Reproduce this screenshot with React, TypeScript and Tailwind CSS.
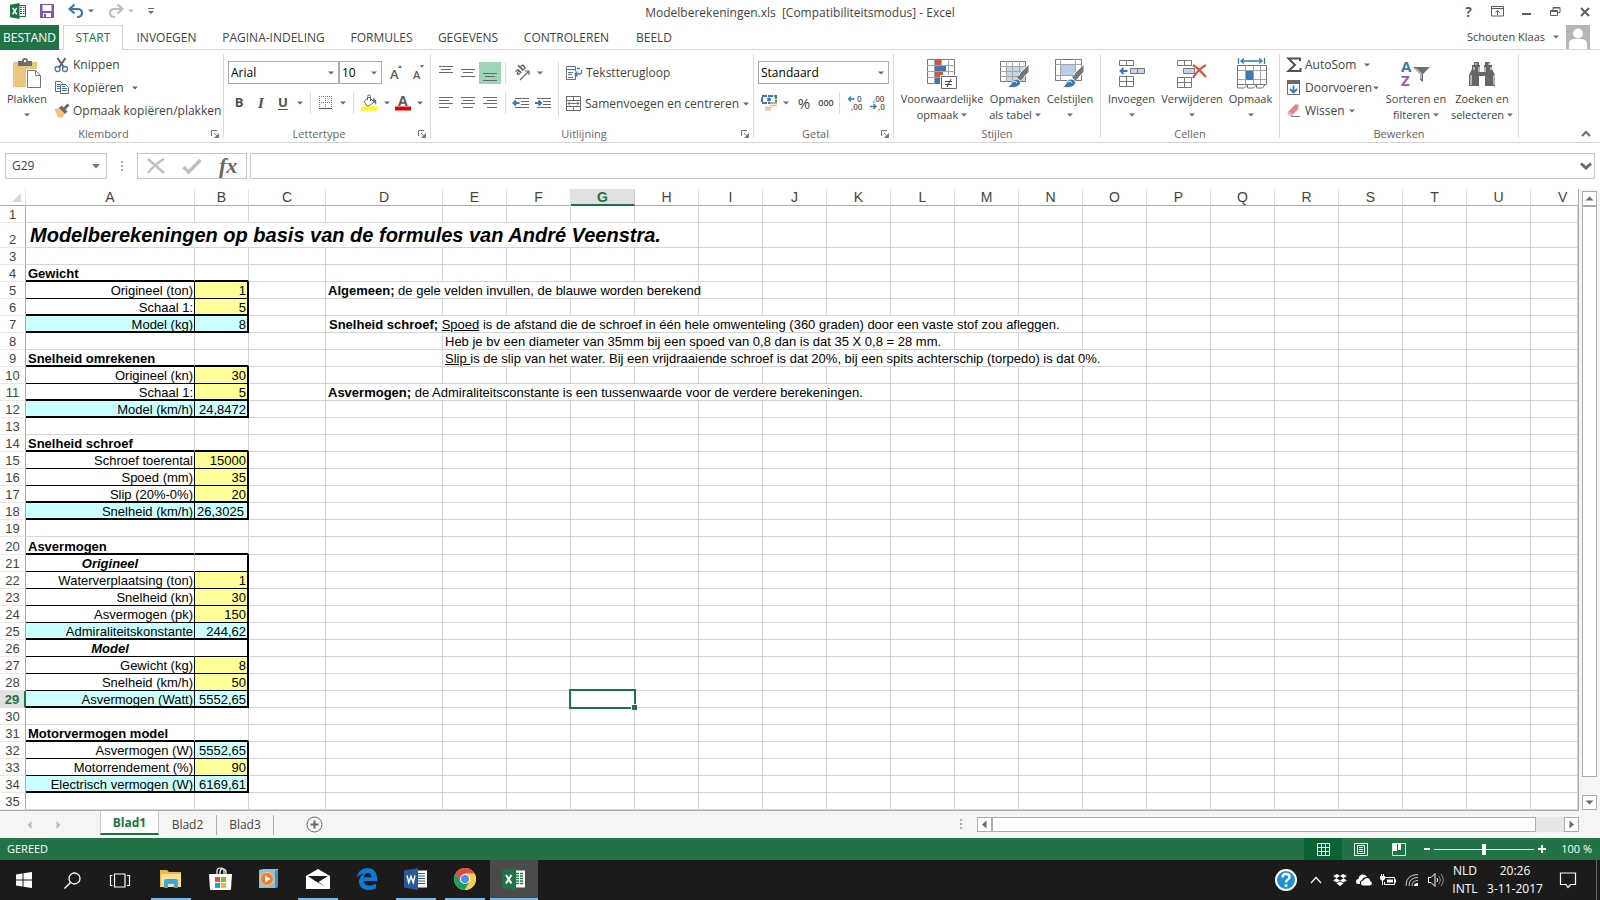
import React from 'react';

type IconProps = { w: number; h: number; children: React.ReactNode; className?: string };

const Icon: React.FC<IconProps> = ({ w, h, children, className = '' }) => (
  <svg width={w} height={h} viewBox={`0 0 ${w} ${h}`} fill="none" className={`shrink-0 overflow-visible ${className}`} aria-hidden="true">
    {children}
  </svg>
);

const Caret = ({ className = 'text-[#6a6a6a]' }: { className?: string }) => (
  <Icon w={6} h={4} className={className}>
    <path d="M0 0.5h6L3 3.5z" fill="currentColor" />
  </Icon>
);

const Launcher = ({ label }: { label: string }) => (
  <button type="button" aria-label={label} className="flex h-4 w-4 items-center justify-center">
    <Icon w={8} h={8}>
      <path d="M0.5 6V0.5H6" stroke="#777" />
      <path d="M3 3l3 3M7.5 3.5v4h-4" stroke="#777" />
      <path d="M7 4v3H4z" fill="#777" />
    </Icon>
  </button>
);

/* ---------- ribbon drawings ---------- */

const ExcelLogo = ({ size = 16 }: { size?: number }) => (
  <svg width={size} height={size} viewBox="0 0 16 16" className="shrink-0" aria-hidden="true">
    <path d="M9 2h7v12H9z" fill="#fff" />
    <path d="M9 2.5h6.5v11H9" fill="none" stroke="#217346" />
    <path d="M10 4.5h2M13 4.5h1.5M10 6.5h2M13 6.5h1.5M10 8.5h2M13 8.5h1.5M10 10.5h2M13 10.5h1.5" stroke="#217346" />
    <path d="M0 1.8L9.5 0v16L0 14.2z" fill="#217346" />
    <path d="M2.7 4.8l4 6.5M6.7 4.8l-4 6.5" stroke="#fff" strokeWidth="1.5" />
  </svg>
);

const PasteIcon = () => (
  <Icon w={30} h={32}>
    <path d="M1 4h24v25H1z" fill="#ecc57f" />
    <path d="M6 3h4a3 3 0 0 1 6 0h4v5H6z" fill="#6d6d6d" />
    <circle cx="13" cy="3" r="1.2" fill="#fff" />
    <path d="M14 11h10l6 6v14H14z" fill="#fff" />
    <path d="M15.5 12.5h8l5 5v12h-13z" fill="#fff" stroke="#777" />
    <path d="M23.5 12.5v5h5" stroke="#777" />
  </Icon>
);

const CutIcon = () => (
  <Icon w={16} h={16}>
    <path d="M3.5 1L10 10.5M11.5 1L5 10.5" stroke="#5f5f5f" strokeWidth="2" />
    <circle cx="3.5" cy="12" r="2.5" stroke="#3d77b5" strokeWidth="1.3" />
    <circle cx="11" cy="12" r="2.5" stroke="#3d77b5" strokeWidth="1.3" />
  </Icon>
);

const CopyIcon = () => (
  <Icon w={16} h={16}>
    <path d="M1.5 1.5h5l2 2v8h-7z" fill="#fff" stroke="#6a6a6a" />
    <path d="M3 4.5h3M3 6.5h3M3 8.5h3" stroke="#3d77b5" />
    <path d="M6.5 4.5h5l3 3v6h-8z" fill="#fff" stroke="#6a6a6a" />
    <path d="M8 8.5h5M8 10.5h5M8 6.5h3" stroke="#3d77b5" />
  </Icon>
);

const BrushIcon = () => (
  <Icon w={16} h={16}>
    <path d="M0.5 6l4.5-1 6 6-3 3.5H4z" fill="#ecc57f" />
    <path d="M5 5l2.5-2.5 6 6L11 11z" fill="#6a6a6a" />
    <path d="M10 6l4.5-4.5" stroke="#6a6a6a" strokeWidth="3" />
  </Icon>
);

const BordersIcon = () => (
  <Icon w={14} h={14}>
    <path d="M0.5 0v12M6.5 0v12M12.5 0v12M0 0.5h13M0 6.5h13" stroke="#777" strokeDasharray="1 1" />
    <path d="M0 12.5h13" stroke="#555" />
  </Icon>
);

const FillIcon = () => (
  <Icon w={17} h={16}>
    <path d="M3 6.5l5-4.5 5 5-5 4H6z" fill="#fff" stroke="#6a6a6a" />
    <path d="M6.5 5V1.5a1.5 1.5 0 0 1 3 0V6" stroke="#6a6a6a" />
    <path d="M12 3c3 1 4 3.5 3 7-1-2-1.5-3-3-3.5z" fill="#3d77b5" />
    <path d="M0 11.5h16v4H0z" fill="#ffff00" />
  </Icon>
);

const AlignIcon = ({ lines }: { lines: string }) => (
  <Icon w={14} h={14}>
    <path d={lines} stroke="#6a6a6a" />
  </Icon>
);

const OrientationIcon = () => (
  <Icon w={16} h={16}>
    <text transform="translate(4 11) rotate(-45)" fill="#5f5f5f" className="text-[10px] font-bold">ab</text>
    <path d="M6 15L14.500 6.500M11 6h4v4" stroke="#6a6a6a" strokeWidth="1.2" />
  </Icon>
);

const IndentIcon = ({ right }: { right?: boolean }) => (
  <Icon w={16} h={12}>
    <path d="M2 1.5h14M8 4.5h8M8 7.5h8M2 10.5h14" stroke="#6a6a6a" />
    <path d={right ? 'M0 6h6M3.5 3.5L6 6 3.5 8.5' : 'M6.5 6h-6M3 3.5L0.5 6 3 8.5'} stroke="#3d77b5" strokeWidth="2" />
  </Icon>
);

const WrapIcon = () => (
  <Icon w={17} h={16}>
    <path d="M0.5 1.5h9v3h-9zM0.5 9.5v5h9v-5M0.5 4.5v5M9.5 4.5v2" stroke="#6a6a6a" />
    <path d="M2 7.5h5M2 9.5h4M2 12.5h5" stroke="#3d77b5" />
    <path d="M11 3.5h3M15.5 5v2.5q0 1.500-2 1.500H9M11.5 6.5L9 9l2.5 2.5" stroke="#3d77b5" strokeWidth="1.3" />
  </Icon>
);

const MergeIcon = () => (
  <Icon w={16} h={16}>
    <path d="M0.5 0.5h14v14h-14zM0.5 4.5h14M0.5 10.5h14M7.5 0.5v4M7.5 10.5v4" stroke="#6a6a6a" />
    <path d="M2 7.5h11M4 5.5l-2 2 2 2M11 5.5l2 2-2 2" stroke="#3d77b5" />
  </Icon>
);

const CurrencyIcon = () => (
  <Icon w={17} h={16}>
    <path d="M1 1h14v7H1z" fill="#fff" stroke="#3d77b5" strokeWidth="2" strokeDasharray="5 1" />
    <circle cx="8" cy="4.5" r="2" fill="#3d77b5" />
    <path d="M9 8h7M9 10.5h7M4 12.5h6M4 14.5h6" stroke="#ecb877" strokeWidth="1.7" />
  </Icon>
);

const DecimalIcon = ({ more }: { more?: boolean }) => (
  <Icon w={16} h={16}>
    <text x={more ? 9 : 3} y="7" fill="#5a5a5a" className="text-[8px] font-semibold">{more ? '0' : ',00'}</text>
    <text x={more ? 3 : 8} y="15" fill="#5a5a5a" className="text-[8px] font-semibold">{more ? ',00' : ',0'}</text>
    <path d={more ? 'M6.5 4h-6M3 1.5L0.5 4 3 6.5' : 'M0 11.5h6M3.5 9L6 11.5 3.5 14'} stroke="#3d77b5" strokeWidth="1.3" />
  </Icon>
);

const ConditionalIcon = () => (
  <Icon w={32} h={32}>
    <path d="M1.5 1.5h27v24h-27z" fill="#fff" stroke="#777" />
    <path d="M1 7.5h28M1 13.5h28M1 19.5h28M8.5 1v25M15.5 1v25M22.5 1v25" stroke="#a5a5a5" />
    <path d="M9 2h6v5H9zM9 14h8v5H9z" fill="#d0593c" />
    <path d="M9 8h11v5H9zM9 20h5v6H9z" fill="#3d77b5" />
    <path d="M14 17h18v15H14z" fill="#fff" />
    <path d="M15.5 18.5h15v12h-15z" fill="#fff" stroke="#6a6a6a" />
    <path d="M19 23.5h7M19 26.5h7M25 21l-4 8" stroke="#444" />
  </Icon>
);

const PaintBrush = () => (
  <>
    <path d="M30 6v8l-6 6-4-4z" fill="#777" stroke="#fff" />
    <path d="M22 16l-4 3 3 4 4-4z" fill="#777" />
    <path d="M8 29c5-1 4-8 9-8 4 0 6 4 3 6.5C17 30 12 30 8 29z" fill="#3d77b5" stroke="#fff" />
    <path d="M14 24q3-2 4 1" stroke="#fff" />
  </>
);

const TableStyleIcon = () => (
  <Icon w={32} h={32}>
    <path d="M1.5 3.5h25v20h-25z" fill="#fff" stroke="#777" />
    <path d="M8 9h18v14H8z" fill="#c3d6ea" />
    <path d="M1 8.5h26M1 13.5h26M1 18.5h26M7.5 3v21M13.5 3v21M20.5 3v21" stroke="#a5a5a5" />
    <PaintBrush />
  </Icon>
);

const CellStyleIcon = () => (
  <Icon w={32} h={32}>
    <path d="M1.5 1.5h26v21h-26z" fill="#fff" stroke="#777" />
    <path d="M1 6.5h27M1 17.5h27M6.5 1v22M21.5 1v22" stroke="#a5a5a5" />
    <path d="M7 7h14v10H7z" fill="#b9cfe8" />
    <PaintBrush />
  </Icon>
);

const InsertIcon = () => (
  <Icon w={30} h={30}>
    <path d="M2.5 1.5h14v5h-14zM9.5 1.5v5M2.5 17.5h14v10h-14zM2.5 22.5h14M9.5 17.5v10" fill="#fff" stroke="#777" />
    <path d="M13.5 9.5h14v5h-14zM20.5 9.5v5" fill="#c3d6ea" stroke="#777" />
    <path d="M10.5 12h-7M6.5 9l-3 3 3 3" stroke="#3d77b5" strokeWidth="1.8" />
  </Icon>
);

const DeleteIcon = () => (
  <Icon w={32} h={30}>
    <path d="M1.5 1.5h14v5h-14zM8.5 1.5v5M1.5 18.5h14v10h-14zM1.5 23.5h14M8.5 18.5v10" fill="#fff" stroke="#777" />
    <path d="M7.5 9.5h11v5h-11z" fill="#c3d6ea" stroke="#777" />
    <path d="M17 6q6 4 13 12M30 6q-8 4-13 13" stroke="#d0593c" strokeWidth="2.2" />
  </Icon>
);

const FormatIcon = () => (
  <Icon w={32} h={32}>
    <path d="M3.5 0v6M29.5 0v6M6 3h21M9 0.5L6 3l3 2.5M24 0.5L27 3l-3 2.5" stroke="#3d77b5" strokeWidth="1.3" />
    <path d="M2.5 7.5h29v19h-29z" fill="#fff" stroke="#777" />
    <path d="M3 12.5h28M3 21.5h28M10.5 8v18M18.5 8v18M25.5 8v18" stroke="#a5a5a5" />
    <path d="M2.5 26v4h7l3-3v3h6l3-3v3h6l3-4" stroke="#777" />
    <path d="M11 13h7v9h-7z" fill="#3d77b5" />
  </Icon>
);

const SigmaIcon = () => (
  <Icon w={16} h={16}>
    <path d="M14 4V1.500H2.500L9 8l-6.500 6h12v-3" stroke="#505050" strokeWidth="2" />
  </Icon>
);

const FillDownIcon = () => (
  <Icon w={16} h={16}>
    <path d="M1.5 1.5h12v13h-12z" fill="#fff" stroke="#6a6a6a" />
    <path d="M1 0h13v4H1z" fill="#6a6a6a" />
    <path d="M7.5 5.5v7M4 9l3.5 3.5L11 9" stroke="#3d77b5" strokeWidth="1.8" />
  </Icon>
);

const EraserIcon = () => (
  <Icon w={16} h={16}>
    <path d="M1.5 9.5L9 1.5h3.5v4L6.5 12z" fill="#e08491" />
    <path d="M1.5 10l2-1.5 3.5 3-1 1.5H3z" fill="#eeb0b8" />
    <path d="M5 13.5h9" stroke="#777" />
  </Icon>
);

const SortIcon = () => (
  <Icon w={32} h={32}>
    <text x="1" y="14" fill="#3d77b5" className="text-[15px] leading-3 font-bold">A</text>
    <text x="1" y="28" fill="#8d5fb0" className="text-[15px] leading-3 font-bold">Z</text>
    <path d="M13 9h17l-7 7v8l-3-2v-6z" fill="#6f6f6f" />
    <path d="M16 10.5l5 5v5.5" stroke="#fff" />
  </Icon>
);

const BinocularsIcon = () => (
  <Icon w={28} h={26}>
    <path d="M1 25V14l3-6V4h2V1h5v3h1v7h4V4h1V1h5v3h2v4l3 6v11H17v-10h-6v10z" fill="#666" />
    <path d="M8 2v2M21 2v2M6 6v3M23 6v3M3 14v10M26 14v10M11 6v5M17 6v5" stroke="#fff" />
  </Icon>
);

/* ---------- ribbon ---------- */

const Group = ({ label, width, launcher, children }: { label: string; width: string; launcher?: boolean; children: React.ReactNode }) => (
  <section aria-label={label} className={`my-1 flex shrink-0 flex-col border-r border-[#dadada] ${width}`}>
    <div className="flex h-[75px] items-start">{children}</div>
    <div className="flex h-[9px] items-center">
      <span className="flex-1 text-center text-[11px] leading-[9px] text-[#666]">{label}</span>
      {launcher && <Launcher label={`${label} opties`} />}
    </div>
  </section>
);

const BigButton = ({ icon, lines, width }: { icon: React.ReactNode; lines: string[]; width: string }) => (
  <button type="button" className={`flex shrink-0 flex-col items-center whitespace-nowrap text-[11px] leading-4 ${width}`}>
    <span className="flex h-[37px] items-center justify-center pt-[2px]">{icon}</span>
    <span className="h-4">{lines[0]}</span>
    <span className="flex h-4 items-center gap-[3px]">
      {lines[1]}
      <Caret />
    </span>
  </button>
);

const SmallButton = ({ icon, label, caret, gap = 'gap-1' }: { icon: React.ReactNode; label: string; caret?: boolean; gap?: string }) => (
  <button type="button" className={`flex h-[23px] items-center whitespace-nowrap text-[12px] leading-4 ${gap}`}>
    <span className="flex items-center gap-[3px]">
      {icon}
      {label}
    </span>
    {caret && <Caret />}
  </button>
);

const ToolButton = ({ label, width, children, active }: { label: string; width: string; children: React.ReactNode; active?: boolean }) => (
  <button type="button" aria-label={label} className={`flex h-[22px] shrink-0 items-center justify-center ${width} ${active ? 'bg-[#9fd5b7]' : ''}`}>
    {children}
  </button>
);

const Rule = ({ className = 'mx-1' }: { className?: string }) => <span className={`h-[22px] w-px shrink-0 bg-[#dadada] ${className}`} />;

const Picker = ({ label, value, width }: { label: string; value: string; width: string }) => (
  <span className={`relative flex h-[23px] shrink-0 items-center border border-[#ababab] ${width}`}>
    <select aria-label={label} defaultValue={value} className="h-full w-full appearance-none bg-transparent pl-[2px] text-[12px] text-black outline-none">
      <option>{value}</option>
    </select>
    <Caret className="pointer-events-none absolute right-1 text-[#6a6a6a]" />
  </span>
);

const Ribbon = () => (
  <div className="flex h-[93px] overflow-hidden border-b border-[#d4d4d4] text-[#444]">
    <Group label="Klembord" width="w-[224px]" launcher>
      <BigButton icon={<PasteIcon />} lines={['Plakken', '']} width="w-[54px]" />
      <div className="-mt-px flex flex-col items-start">
        <SmallButton icon={<CutIcon />} label="Knippen" />
        <SmallButton icon={<CopyIcon />} label="Kopiëren" caret gap="gap-2" />
        <SmallButton icon={<BrushIcon />} label="Opmaak kopiëren/plakken" />
      </div>
    </Group>

    <Group label="Lettertype" width="w-[207px]" launcher>
      <div className="flex flex-col gap-2 pt-[7px] pl-1">
        <div className="flex items-center">
          <Picker label="Lettertype" value="Arial" width="w-[111px]" />
          <Picker label="Tekengrootte" value="10" width="w-[43px]" />
          <ToolButton label="Groter" width="w-7">
            <Icon w={13} h={16}>
              <text x="0" y="14" fill="#5a5a5a" className="text-[13px] font-semibold">A</text>
              <path d="M8 3h4l-2-3z" fill="#3d77b5" />
            </Icon>
          </ToolButton>
          <ToolButton label="Kleiner" width="w-4">
            <Icon w={13} h={16}>
              <text x="1" y="14" fill="#5a5a5a" className="text-[11px] font-semibold">A</text>
              <path d="M8 0h4l-2 3z" fill="#3d77b5" />
            </Icon>
          </ToolButton>
        </div>
        <div className="flex items-center text-[13px] text-[#505050]">
          <ToolButton label="Vet" width="w-[22px]"><b>B</b></ToolButton>
          <ToolButton label="Cursief" width="w-[22px]"><i className="font-['Liberation_Serif',serif] text-[15px] font-bold">I</i></ToolButton>
          <ToolButton label="Onderstrepen" width="w-[22px]"><b className="underline underline-offset-2">U</b></ToolButton>
          <ToolButton label="Onderstrepen opties" width="w-3"><Caret /></ToolButton>
          <Rule className="mr-2 ml-1" />
          <BordersIcon />
          <ToolButton label="Randen opties" width="w-5"><Caret /></ToolButton>
          <Rule className="mr-[7px]" />
          <FillIcon />
          <ToolButton label="Opvulkleur opties" width="w-[17px]"><Caret /></ToolButton>
          <Icon w={17} h={16}>
            <text x="3" y="11" fill="#5a5a5a" className="text-[14px] font-bold">A</text>
            <path d="M0 11.5h16v4H0z" fill="#e60000" />
          </Icon>
          <ToolButton label="Tekstkleur opties" width="w-4"><Caret /></ToolButton>
        </div>
      </div>
    </Group>

    <Group label="Uitlijning" width="w-[323px]" launcher>
      <div className="flex pt-[7px] pl-1">
        <div className="flex flex-col gap-2">
          <div className="flex h-[23px] items-center">
            <ToolButton label="Boven uitlijnen" width="w-[22px]"><AlignIcon lines="M0 0.500h14M2 3.500h10M0 6.500h14" /></ToolButton>
            <ToolButton label="Centreren verticaal" width="w-[22px]"><AlignIcon lines="M0 3.500h14M2 6.500h10M0 10.500h14" /></ToolButton>
            <ToolButton label="Onder uitlijnen" width="w-[22px]" active><AlignIcon lines="M0 7.500h14M2 10.500h10M0 14.500h14" /></ToolButton>
            <Rule />
            <ToolButton label="Afdrukstand" width="w-6"><OrientationIcon /></ToolButton>
            <ToolButton label="Afdrukstand opties" width="w-3"><Caret /></ToolButton>
          </div>
          <div className="flex items-center">
            <ToolButton label="Links uitlijnen" width="w-[22px]"><AlignIcon lines="M0 1.5h14M0 4.5h10M0 7.5h14M0 11.5h10" /></ToolButton>
            <ToolButton label="Centreren" width="w-[22px]"><AlignIcon lines="M0 1.5h14M2 4.5h10M0 7.5h14M2 11.5h10" /></ToolButton>
            <ToolButton label="Rechts uitlijnen" width="w-[22px]"><AlignIcon lines="M0 1.5h14M4 4.5h10M0 7.5h14M4 11.5h10" /></ToolButton>
            <Rule />
            <ToolButton label="Inspringing verkleinen" width="w-[22px]"><IndentIcon /></ToolButton>
            <ToolButton label="Inspringing vergroten" width="w-[22px]"><IndentIcon right /></ToolButton>
          </div>
        </div>
        <span className="mr-[7px] ml-1 h-14 w-px bg-[#dadada]" />
        <div className="flex flex-col items-start gap-2">
          <SmallButton icon={<WrapIcon />} label="Tekstterugloop" />
          <SmallButton icon={<MergeIcon />} label="Samenvoegen en centreren" caret />
        </div>
      </div>
    </Group>

    <Group label="Getal" width="w-[140px]" launcher>
      <div className="flex flex-col gap-2 pt-[7px] pl-1">
        <Picker label="Getalnotatie" value="Standaard" width="w-[131px]" />
        <div className="flex items-center">
          <ToolButton label="Financieel" width="w-[22px]"><CurrencyIcon /></ToolButton>
          <ToolButton label="Financieel opties" width="w-3"><Caret /></ToolButton>
          <ToolButton label="Procent" width="w-6"><span className="text-[15px]">%</span></ToolButton>
          <ToolButton label="Duizendtal" width="w-5"><span className="text-[9px] font-semibold">000</span></ToolButton>
          <Rule className="mr-[5px] ml-[3px]" />
          <ToolButton label="Meer decimalen" width="w-[22px]"><DecimalIcon more /></ToolButton>
          <ToolButton label="Minder decimalen" width="w-[22px]"><DecimalIcon /></ToolButton>
        </div>
      </div>
    </Group>

    <Group label="Stijlen" width="w-[207px]">
      <BigButton icon={<ConditionalIcon />} lines={['Voorwaardelijke', 'opmaak']} width="w-[96px]" />
      <BigButton icon={<TableStyleIcon />} lines={['Opmaken', 'als tabel']} width="w-[50px]" />
      <BigButton icon={<CellStyleIcon />} lines={['Celstijlen', '']} width="w-[60px]" />
    </Group>

    <Group label="Cellen" width="w-[179px]">
      <BigButton icon={<InsertIcon />} lines={['Invoegen', '']} width="w-[61px]" />
      <BigButton icon={<DeleteIcon />} lines={['Verwijderen', '']} width="w-[60px]" />
      <BigButton icon={<FormatIcon />} lines={['Opmaak', '']} width="w-[57px]" />
    </Group>

    <Group label="Bewerken" width="w-[239px]">
      <div className="-mt-px flex w-[99px] shrink-0 flex-col items-start pl-[6px]">
        <SmallButton icon={<SigmaIcon />} label="AutoSom" caret gap="gap-2" />
        <SmallButton icon={<FillDownIcon />} label="Doorvoeren" caret gap="gap-px" />
        <SmallButton icon={<EraserIcon />} label="Wissen" caret />
      </div>
      <BigButton icon={<SortIcon />} lines={['Sorteren en', 'filteren']} width="w-[74px]" />
      <BigButton icon={<BinocularsIcon />} lines={['Zoeken en', 'selecteren']} width="w-[58px]" />
    </Group>

    <div className="flex flex-1 items-end justify-end pr-[9px] pb-[3px]">
      <button type="button" aria-label="Lint samenvouwen">
        <Icon w={10} h={10}>
          <path d="M1 7l4-4 4 4" stroke="#6a6a6a" strokeWidth="2" />
        </Icon>
      </button>
    </div>
  </div>
);

const tabs = [
  { name: 'INVOEGEN', width: 'w-[87px]' },
  { name: 'PAGINA-INDELING', width: 'w-[127px]' },
  { name: 'FORMULES', width: 'w-[89px]' },
  { name: 'GEGEVENS', width: 'w-[84px]' },
  { name: 'CONTROLEREN', width: 'w-[113px]' },
  { name: 'BEELD', width: 'w-[62px]' },
];

const TitleBar = () => (
  <header className="grid h-[25px] grid-cols-[1fr_auto_1fr] items-center text-[#444]">
    <div className="flex items-center gap-[14px] pb-[3px] pl-[10px]">
      <ExcelLogo />
      <button type="button" aria-label="Opslaan">
        <Icon w={14} h={14}>
          <path d="M0 0h14v14H0z" fill="#8455ab" />
          <path d="M2.5 1h9v6h-9zM3 9h8v4H3z" fill="#fff" />
          <path d="M4 10h2v3H4z" fill="#8455ab" />
        </Icon>
      </button>
      <button type="button" aria-label="Ongedaan maken" className="flex items-center gap-1">
        <Icon w={16} h={14}>
          <path d="M2 5h7q5 0 5 4t-5 4" stroke="#3d77b5" strokeWidth="2.2" />
          <path d="M6.5 0.5L1.5 5l5 4.500" stroke="#3d77b5" strokeWidth="2.2" />
        </Icon>
        <Caret />
      </button>
      <button type="button" aria-label="Opnieuw" className="flex items-center gap-1">
        <Icon w={16} h={14}>
          <path d="M14 5H7Q2 5 2 9t5 4" stroke="#bdbdbd" strokeWidth="2.2" />
          <path d="M9.5 0.5L14.5 5l-5 4.500" stroke="#bdbdbd" strokeWidth="2.2" />
        </Icon>
        <Caret className="text-[#bdbdbd]" />
      </button>
      <button type="button" aria-label="Werkbalk aanpassen">
        <Icon w={6} h={8}>
          <path d="M0 1.5h6" stroke="#6a6a6a" />
          <path d="M0 4h6L3 7z" fill="#6a6a6a" />
        </Icon>
      </button>
    </div>
    <h1 className="text-[12px] leading-4 whitespace-pre">{'Modelberekeningen.xls  [Compatibiliteitsmodus] - Excel'}</h1>
    <div className="flex justify-end pr-px pb-[2px]">
      <button type="button" aria-label="Help" className="w-[29px] text-[14px] leading-5 font-bold text-[#5f5f5f]">?</button>
      <button type="button" aria-label="Weergaveopties voor lint" className="flex w-[29px] items-center justify-center">
        <Icon w={13} h={11}>
          <path d="M0.5 0.5h12v9.500h-12zM0.5 2.5h12M6.5 9V5M4.5 6.5l2-2 2 2" stroke="#5f5f5f" />
        </Icon>
      </button>
      <button type="button" aria-label="Minimaliseren" className="flex w-[29px] items-center justify-center">
        <Icon w={10} h={10}><path d="M0 7h9" stroke="#5f5f5f" strokeWidth="2" /></Icon>
      </button>
      <button type="button" aria-label="Verkleinen" className="flex w-[29px] items-center justify-center">
        <Icon w={11} h={11}>
          <path d="M0.5 4.5h7v5h-7zM0.5 5.5h7M3 4V1.5h7v5H8M3 2h7" stroke="#5f5f5f" />
        </Icon>
      </button>
      <button type="button" aria-label="Sluiten" className="flex w-[29px] items-center justify-center">
        <Icon w={10} h={10}><path d="M1 1l8 8M9 1L1 9" stroke="#5f5f5f" strokeWidth="2" /></Icon>
      </button>
    </div>
  </header>
);

const TabStrip = () => (
  <nav className="flex h-[25px] text-[12px] text-[#444]">
    <button type="button" className="w-[59px] bg-[#217346] pt-px text-white">BESTAND</button>
    <span className="w-1 border-b border-[#d4d4d4]" />
    <button type="button" className="w-[60px] border border-b-0 border-[#d4d4d4] text-[#217346]">START</button>
    {tabs.map((tab) => (
      <button key={tab.name} type="button" className={`border-b border-[#d4d4d4] pt-[2px] ${tab.width}`}>{tab.name}</button>
    ))}
    <div className="flex flex-1 items-end justify-end border-b border-[#d4d4d4] pr-[10px]">
      <button type="button" className="flex h-6 items-center gap-2 text-[11px]">
        Schouten Klaas
        <Caret />
      </button>
      <Icon w={24} h={24} className="ml-[7px]">
        <path d="M0 0h24v24H0z" fill="#b5b5b5" />
        <circle cx="12" cy="8.5" r="5" fill="#fff" />
        <path d="M3 24v-5q0-5 6-5h6q6 0 6 5v5z" fill="#fff" />
      </Icon>
    </div>
  </nav>
);

const FormulaBar = () => (
  <div className="flex h-[46px] items-center pr-[5px] pl-[5px]">
    <span className="relative flex h-[26px] w-[102px] items-center border border-[#c6c6c6]">
      <input aria-label="Naamvak" defaultValue="G29" className="w-full bg-transparent pl-[6px] text-[12px] text-[#444] outline-none" />
      <Icon w={8} h={5} className="absolute right-[6px]"><path d="M0 0h8L4 4.5z" fill="#777" /></Icon>
    </span>
    <Icon w={30} h={12}>
      <path d="M14 1h2v2h-2zM14 5h2v2h-2zM14 9h2v2h-2z" fill="#ababab" />
    </Icon>
    <div className="flex h-[26px] w-[110px] items-center justify-around border border-[#c6c6c6]">
      <button type="button" aria-label="Annuleren">
        <Icon w={18} h={16}><path d="M1 1l16 14M17 1Q8 6 1 15" stroke="#c0c0c0" strokeWidth="2.5" /></Icon>
      </button>
      <button type="button" aria-label="Invoeren">
        <Icon w={20} h={16}><path d="M1.5 9l5 5L18.5 2" stroke="#c0c0c0" strokeWidth="3.5" /></Icon>
      </button>
      <button type="button" aria-label="Functie invoegen" className="font-['Liberation_Serif',serif] text-[22px] leading-6 font-bold text-[#666] italic">fx</button>
    </div>
    <span className="relative ml-[3px] flex h-[26px] flex-1 items-center border border-[#c6c6c6]">
      <input aria-label="Formulebalk" className="w-full bg-transparent px-2 text-[12px] outline-none" />
      <Icon w={12} h={8} className="absolute right-[2px]"><path d="M1 1.5l5 4.500 5-4.500" stroke="#6a6a6a" strokeWidth="3" /></Icon>
    </span>
  </div>
);

/* ---------- sheet ---------- */

type Note = { from: number; span: number; body: React.ReactNode; className?: string };
type Row = {
  a?: string;
  b?: string;
  kind?: 'title' | 'head' | 'sub' | 'input' | 'result' | 'derived';
  line?: 'thin' | 'thick';
  bLeft?: boolean;
  note?: Note;
};

const letters = 'ABCDEFGHIJKLMNOPQRSTUV'.split('');

const rows: Record<number, Row> = {
  2: { kind: 'title' },
  4: { a: 'Gewicht', kind: 'head' },
  5: {
    a: 'Origineel (ton)', b: '1', kind: 'input',
    note: { from: 3, span: 5, body: <><b>Algemeen;</b> de gele velden invullen, de blauwe worden berekend</> },
  },
  6: { a: 'Schaal 1:', b: '5', kind: 'input', line: 'thick' },
  7: {
    a: 'Model (kg)', b: '8', kind: 'result', line: 'thick',
    note: {
      from: 3, span: 11, className: 'pl-[3px]',
      body: <><b>Snelheid schroef;</b> <u>Spoed</u> is de afstand die de schroef in één hele omwenteling (360 graden) door een vaste stof zou afleggen.</>,
    },
  },
  8: { note: { from: 4, span: 8, body: 'Heb je bv een diameter van 35mm bij een spoed van 0,8 dan is dat 35 X 0,8 = 28 mm.' } },
  9: {
    a: 'Snelheid omrekenen', kind: 'head',
    note: { from: 4, span: 11, body: <><u>Slip </u>is de slip van het water. Bij een vrijdraaiende schroef is dat 20%, bij een spits achterschip (torpedo) is dat 0%.</> },
  },
  10: { a: 'Origineel (kn)', b: '30', kind: 'input' },
  11: {
    a: 'Schaal 1:', b: '5', kind: 'input', line: 'thick',
    note: { from: 3, span: 8, body: <><b>Asvermogen;</b> de Admiraliteitsconstante is een tussenwaarde voor de verdere berekeningen.</> },
  },
  12: { a: 'Model (km/h)', b: '24,8472', kind: 'result', line: 'thick' },
  14: { a: 'Snelheid schroef', kind: 'head' },
  15: { a: 'Schroef toerental', b: '15000', kind: 'input' },
  16: { a: 'Spoed (mm)', b: '35', kind: 'input' },
  17: { a: 'Slip (20%-0%)', b: '20', kind: 'input', line: 'thick' },
  18: { a: 'Snelheid (km/h)', b: '26,3025', kind: 'result', line: 'thick', bLeft: true },
  20: { a: 'Asvermogen', kind: 'head' },
  21: { a: 'Origineel', kind: 'sub' },
  22: { a: 'Waterverplaatsing (ton)', b: '1', kind: 'input' },
  23: { a: 'Snelheid (kn)', b: '30', kind: 'input' },
  24: { a: 'Asvermogen (pk)', b: '150', kind: 'input' },
  25: { a: 'Admiraliteitskonstante', b: '244,62', kind: 'result', line: 'thick' },
  26: { a: 'Model', kind: 'sub' },
  27: { a: 'Gewicht (kg)', b: '8', kind: 'input' },
  28: { a: 'Snelheid (km/h)', b: '50', kind: 'input' },
  29: { a: 'Asvermogen (Watt)', b: '5552,65', kind: 'result', line: 'thick' },
  31: { a: 'Motorvermogen model', kind: 'head' },
  32: { a: 'Asvermogen (W)', b: '5552,65', kind: 'derived' },
  33: { a: 'Motorrendement (%)', b: '90', kind: 'input' },
  34: { a: 'Electrisch vermogen (W)', b: '6169,61', kind: 'result', line: 'thick' },
};

const plain = 'border-r border-b border-[#d4d4d4]';

const LabelCells = ({ row }: { row: Row }) => {
  const { kind, a, b } = row;
  if (!kind) {
    return (
      <>
        <td className={plain} />
        <td className={plain} />
      </>
    );
  }
  if (kind === 'head') {
    return (
      <>
        <td className="border-r border-b-2 border-r-[#d4d4d4] border-b-black pl-[2px] leading-[13px] font-bold">{a}</td>
        <td className="border-r border-b-2 border-r-[#d4d4d4] border-b-black" />
      </>
    );
  }
  if (kind === 'sub') {
    return (
      <>
        <td className="border-r border-b border-r-[#d4d4d4] border-b-black text-center font-bold italic">{a}</td>
        <td className="border-r-2 border-b border-black" />
      </>
    );
  }
  const bottom = row.line === 'thick' ? 'border-b-2 leading-[13px]' : 'border-b';
  const fillA = kind === 'result' ? 'bg-[#ccffff]' : '';
  const fillB = kind === 'input' ? 'bg-[#ffff99]' : 'bg-[#ccffff]';
  return (
    <>
      <td className={`border-r border-black pr-px text-right ${bottom} ${fillA}`}>{a}</td>
      <td className={`border-r-2 border-black ${bottom} ${fillB} ${row.bLeft ? 'pl-[2px] text-left' : 'pr-px text-right'}`}>{b}</td>
    </>
  );
};

const GridCells = ({ n, row }: { n: number; row: Row }) => {
  const cells: React.ReactNode[] = [];
  for (let col = 2; col < letters.length; col++) {
    if (row.note && col === row.note.from) {
      cells.push(
        <td key={col} colSpan={row.note.span} className={`${plain} ${row.note.className ?? 'pl-[2px]'}`}>{row.note.body}</td>,
      );
      col += row.note.span - 1;
    } else if (n === 29 && letters[col] === 'G') {
      cells.push(
        <td key={col} className={`relative ${plain}`}>
          <span className="absolute -inset-x-[2px] -top-[2px] -bottom-[2px] border-2 border-[#217346]" />
          <span className="absolute -right-[3px] -bottom-[3px] h-[6px] w-[6px] border-t border-l border-white bg-[#217346]" />
        </td>,
      );
    } else {
      cells.push(<td key={col} className={plain} />);
    }
  }
  return <>{cells}</>;
};

const rowHeight = (n: number) => {
  if (n === 2) return 'h-[25px]';
  if (n === 20) return 'h-[18px]';
  return 'h-[17px]';
};

const Sheet = () => (
  <table className="w-full table-fixed border-separate border-spacing-0 border-r border-b border-[#ababab] font-['Liberation_Sans',Arial,sans-serif] text-[13px] leading-[15px] whitespace-nowrap text-black [&_td]:align-bottom [&_tbody_th]:align-bottom">
    <colgroup>
      <col className="w-[26px]" />
      <col className="w-[169px]" />
      <col className="w-[54px]" />
      <col className="w-[77px]" />
      <col className="w-[117px]" />
      {letters.slice(4, 21).map((l) => <col key={l} className="w-[64px]" />)}
      <col />
    </colgroup>
    <thead>
      <tr className="h-[17px] text-[14px] text-[#444]">
        <th aria-label="Alles selecteren" className="border-r border-b border-r-[#e0e0e0] border-b-[#ababab]">
          <Icon w={9} h={9} className="ml-3"><path d="M9 0v9H0z" fill="#d8d8d8" /></Icon>
        </th>
        {letters.map((l) => (
          <th
            key={l}
            scope="col"
            className={
              l === 'G'
                ? 'border-r border-b-2 border-r-[#c6c6c6] border-b-[#217346] bg-[#e1e1e1] leading-[14px] font-bold text-[#217346]'
                : l === 'V'
                  ? 'border-b border-[#ababab] pl-[27px] text-left font-normal'
                  : 'border-r border-b border-r-[#e0e0e0] border-b-[#ababab] font-normal'
            }
          >
            {l}
          </th>
        ))}
      </tr>
    </thead>
    <tbody>
      {Array.from({ length: 35 }, (_, i) => i + 1).map((n) => {
        const row = rows[n] ?? {};
        return (
          <tr key={n} className={rowHeight(n)}>
            <th
              scope="row"
              className={
                n === 29
                  ? 'border-r-2 border-b border-r-[#217346] border-b-[#e0e0e0] bg-[#e1e1e1] font-bold text-[#217346]'
                  : 'border-r border-b border-r-[#ababab] border-b-[#e8e8e8] font-normal text-[#444]'
              }
            >
              {n}
            </th>
            {row.kind === 'title' ? (
              <>
                <td colSpan={8} className={`${plain} pl-1 text-[20px] leading-6 font-bold italic`}>
                  Modelberekeningen op basis van de formules van André Veenstra.
                </td>
                {letters.slice(8).map((l) => <td key={l} className={plain} />)}
              </>
            ) : (
              <>
                <LabelCells row={row} />
                <GridCells n={n} row={row} />
              </>
            )}
          </tr>
        );
      })}
    </tbody>
  </table>
);

const ArrowBox = ({ d, label }: { d: string; label: string }) => (
  <button type="button" aria-label={label} className="flex h-[15px] w-[15px] shrink-0 items-center justify-center border border-[#ababab] bg-white">
    <Icon w={9} h={9}><path d={d} fill="#6a6a6a" /></Icon>
  </button>
);

const SheetTabs = () => (
  <div className="flex h-[27px] items-center bg-[#f5f5f5] text-[12px] text-[#444]">
    <div className="flex w-[100px] items-center gap-6 pl-[27px]">
      <Icon w={5} h={8}><path d="M4.5 0v8L0.5 4z" fill="#bbb" /></Icon>
      <Icon w={5} h={8}><path d="M0.5 0v8l4-4z" fill="#bbb" /></Icon>
    </div>
    <button type="button" className="h-6 w-[59px] self-start border-x border-b-2 border-x-[#c6c6c6] border-b-[#217346] bg-white pt-px font-bold text-[#217346]">Blad1</button>
    <button type="button" className="h-5 w-[58px] border-r border-[#ababab]">Blad2</button>
    <button type="button" className="h-5 w-[57px] border-r border-[#ababab]">Blad3</button>
    <button type="button" aria-label="Nieuw blad" className="ml-8">
      <Icon w={17} h={17}>
        <circle cx="8.5" cy="8.5" r="7.5" stroke="#6a6a6a" />
        <path d="M8.5 4.5v8M4.5 8.5h8" stroke="#6a6a6a" strokeWidth="2" />
      </Icon>
    </button>
    <div className="flex flex-1 items-center justify-end pr-[21px]">
      <Icon w={2} h={11}><path d="M0 0h2v2H0zM0 4h2v2H0zM0 8h2v2H0z" fill="#ababab" /></Icon>
      <div className="ml-[15px] flex max-w-[602px] flex-1 items-center bg-[#e6e6e6]">
        <ArrowBox label="Naar links" d="M6.500 0.500v8L2 4.500z" />
        <span className="h-[15px] flex-1 border border-[#ababab] bg-white" />
        <span className="w-7" />
        <ArrowBox label="Naar rechts" d="M2.500 0.500v8L7 4.500z" />
      </div>
    </div>
  </div>
);

const StatusBar = () => (
  <div className="flex h-[22px] items-center bg-[#217346] text-[11px] text-white">
    <span className="flex-1 pl-[7px]">GEREED</span>
    <button type="button" aria-label="Normaal" className="flex h-full w-[38px] items-center justify-center bg-[#0a6332]">
      <Icon w={13} h={13}><path d="M0.5 0.5h12v12h-12zM0.5 4.5h12M0.5 8.5h12M4.5 0v13M8.5 0v13" stroke="#fff" /></Icon>
    </button>
    <button type="button" aria-label="Pagina-indeling" className="flex w-[38px] items-center justify-center">
      <Icon w={14} h={13}><path d="M0.5 0.5h13v12h-13zM3.5 2.5h7v8h-7zM5 4.5h4M5 6.5h4M5 8.5h4" stroke="#fff" /></Icon>
    </button>
    <button type="button" aria-label="Pagina-eindevoorbeeld" className="flex w-[38px] items-center justify-center">
      <Icon w={14} h={13}>
        <path d="M0.5 0.5h13v12h-13z" stroke="#dfeee5" />
        <path d="M1 1h4v7H1zM6 1h3v6H6z" fill="#fff" />
      </Icon>
    </button>
    <button type="button" aria-label="Uitzoomen" className="ml-[2px] flex w-[14px] justify-center">
      <Icon w={6} h={6}><path d="M0 3h6" stroke="#fff" strokeWidth="2" /></Icon>
    </button>
    <input
      type="range"
      aria-label="In- en uitzoomen"
      min={10}
      max={190}
      defaultValue={100}
      className="h-3 w-[100px] appearance-none bg-[linear-gradient(#fff,#fff)] bg-[length:100%_1px] bg-center bg-no-repeat [&::-webkit-slider-thumb]:h-[11px] [&::-webkit-slider-thumb]:w-1 [&::-webkit-slider-thumb]:appearance-none [&::-webkit-slider-thumb]:bg-white"
    />
    <button type="button" aria-label="Inzoomen" className="flex w-4 justify-center">
      <Icon w={8} h={8}><path d="M0 4h8M4 0v8" stroke="#fff" strokeWidth="2" /></Icon>
    </button>
    <span className="w-[50px] pr-2 text-right whitespace-nowrap">100 %</span>
  </div>
);

/* ---------- taskbar ---------- */

const ExplorerIcon = () => (
  <Icon w={22} h={20}>
    <path d="M0 1h7l2 2h12v15H0z" fill="#e9b84c" />
    <path d="M1 5h20v13H1z" fill="#fbe08d" />
    <path d="M4 19v-7q0-2 2-2h10q2 0 2 2v7h-4v-4H8v4z" fill="#36a9e0" />
  </Icon>
);

const StoreIcon = () => (
  <Icon w={23} h={24}>
    <path d="M8 7V4q0-3 3.500-3T15 4v3M11 7V5q0-3 3-3t3 3v2" stroke="#fff" strokeWidth="1.2" />
    <path d="M0 7h23l-1 15q0 1-1 1H2q-1 0-1-1z" fill="#fff" />
    <path d="M6 10h5v5H6z" fill="#e8502f" />
    <path d="M12 10h5v5h-5z" fill="#7fb92c" />
    <path d="M6 16h5v5H6z" fill="#1fa0e4" />
    <path d="M12 16h5v5h-5z" fill="#fcb813" />
  </Icon>
);

const MediaIcon = () => (
  <Icon w={20} h={20}>
    <path d="M0 1l4-1h15v18l-3 1H0z" fill="#8cc1dc" />
    <path d="M16 1h3v17l-3 1z" fill="#4e8fb5" />
    <circle cx="8" cy="10" r="6.5" fill="#ef7f2c" stroke="#f8c9a0" />
    <path d="M6 6.5v7l5.500-3.500z" fill="#fff" />
  </Icon>
);

const MailIcon = () => (
  <Icon w={24} h={20}>
    <path d="M0 7L12 0l12 7v13H0z" fill="#fff" />
    <path d="M2 7h20L12.5 13l7 4.500L9 12z" fill="#1c1b1a" />
  </Icon>
);

const EdgeIcon = () => (
  <Icon w={22} h={22}>
    <path d="M1 9.5C2 3.5 6 0 11.5 0 17.5 0 21 4.5 21 10.5V13H7.5c.3 3 2.7 4.5 6 4.5 2.3 0 4.5-.6 6.5-1.8v4.5C18 21.3 15.5 22 12.5 22 6.5 22 3 18.3 3 13.5 3 10 5 7.3 8 6 4.8 6.2 2.5 7.5 1 9.5zM7.7 9.3h7.8c0-2.5-1.2-4.2-3.7-4.2-2.3 0-3.8 1.7-4.1 4.2z" fill="#0a7bd8" />
  </Icon>
);

const WordIcon = () => (
  <Icon w={24} h={22}>
    <path d="M12 2.5h11v17H12z" fill="#fff" />
    <path d="M14 5.5h7M14 8h7M14 10.5h7M14 13h7M14 15.5h7" stroke="#2b579a" />
    <path d="M0 2.5L14 0v22L0 19.5z" fill="#2b579a" />
    <path d="M3 7.5l1.800 7L7 8.500l2.200 6 1.800-7" stroke="#fff" strokeWidth="1.5" />
  </Icon>
);

const ChromeIcon = () => (
  <Icon w={22} h={22}>
    <circle cx="11" cy="11" r="11" fill="#e0e0e0" />
    <path d="M1.5 5.5A11 11 0 0 1 20.5 5.5H11L6.2 13.7z" fill="#dd4b3e" />
    <path d="M20.8 6A11 11 0 0 1 10.5 22L15.8 13.7 11 5.8z" fill="#fdcf46" />
    <path d="M1.5 5.5A11 11 0 0 0 10.5 22l4.800-7.500-4.300 1.500-4.800-2.500z" fill="#1b9f57" />
    <circle cx="11" cy="11" r="5" fill="#fff" />
    <circle cx="11" cy="11" r="4" fill="#4b8bf4" />
  </Icon>
);

const ExcelTaskIcon = () => (
  <Icon w={24} h={22}>
    <path d="M12 2.5h11v17H12z" fill="#fff" />
    <path d="M14 5.5h3M18 5.5h3M14 8h3M18 8h3M14 10.5h3M18 10.5h3M14 13h3M18 13h3M14 15.5h3M18 15.5h3" stroke="#217346" strokeWidth="1.5" />
    <path d="M0 2.5L14 0v22L0 19.5z" fill="#217346" />
    <path d="M4 7l5.500 8.500M9.500 7L4 15.500" stroke="#fff" strokeWidth="2" />
  </Icon>
);

const apps = [
  { name: 'Verkenner', icon: <ExplorerIcon />, open: true },
  { name: 'Store', icon: <StoreIcon /> },
  { name: 'Media Player', icon: <MediaIcon /> },
  { name: 'Mail', icon: <MailIcon />, open: true },
  { name: 'Edge', icon: <EdgeIcon /> },
  { name: 'Word', icon: <WordIcon />, open: true },
  { name: 'Chrome', icon: <ChromeIcon />, open: true },
];

const TrayButton = ({ label, width = 'w-6', children }: { label: string; width?: string; children: React.ReactNode }) => (
  <button type="button" aria-label={label} className={`flex h-full shrink-0 items-center justify-center ${width}`}>{children}</button>
);

const Taskbar = () => (
  <footer className="flex h-10 items-center bg-[#1c1b1a] text-[12px] leading-[18px] text-white">
    <TrayButton label="Start" width="w-12">
      <Icon w={16} h={16}><path d="M0 2.5L6.5 1.5v6H0zM7.5 1.3L16 0v7.5H7.5zM0 8.5h6.500v6L0 13.500zM7.5 8.5H16V16l-8.500-1.300z" fill="#fff" /></Icon>
    </TrayButton>
    <TrayButton label="Zoeken" width="w-12">
      <Icon w={17} h={17}>
        <circle cx="10.5" cy="6.5" r="5.5" stroke="#fff" strokeWidth="1.3" />
        <path d="M6.5 10.5L0.5 16.5" stroke="#fff" strokeWidth="1.5" />
      </Icon>
    </TrayButton>
    <TrayButton label="Taakweergave" width="w-[51px]">
      <Icon w={20} h={15} className="mr-[3px]"><path d="M4.5 1h10.500v13H4.5zM2.5 2.5H0.5v10h2M17 2.5h2.500v10H17" stroke="#fff" strokeWidth="1.2" /></Icon>
    </TrayButton>
    <div className="flex h-full gap-px">
      {apps.map((app) => (
        <button key={app.name} type="button" aria-label={app.name} className="flex h-full w-12 flex-col items-center">
          <span className="flex h-[38px] items-center">{app.icon}</span>
          {app.open && <span className="h-[2px] w-10 bg-[#76b9ed]" />}
        </button>
      ))}
      <button type="button" aria-label="Excel" className="flex h-full w-12 flex-col items-center bg-[#4b4a49]">
        <span className="flex h-[38px] items-center"><ExcelTaskIcon /></span>
        <span className="h-[2px] w-full bg-[#76b9ed]" />
      </button>
    </div>
    <div className="flex h-full flex-1 items-center justify-end">
      <TrayButton label="Help" width="w-9">
        <Icon w={24} h={24}>
          <circle cx="12" cy="12" r="10" fill="#1f8fd6" stroke="#fff" strokeWidth="2" />
          <path d="M8.5 9.5Q8.5 6 12 6t3.500 3q0 1.800-2 2.800-1.500.8-1.500 2.700" stroke="#fff" strokeWidth="2.4" />
          <circle cx="12" cy="17.5" r="1.5" fill="#fff" />
        </Icon>
      </TrayButton>
      <TrayButton label="Verborgen pictogrammen"><Icon w={12} h={8}><path d="M1 7l5-5.500L11 7" stroke="#fff" strokeWidth="1.2" /></Icon></TrayButton>
      <TrayButton label="Dropbox">
        <Icon w={14} h={13}><path d="M4 0l3 2-3.500 2.300L0 2zM10 0l4 2-3.500 2.300L7 2zM0 6.500l3.500-2.200L7 6.500 4 8.500zM14 6.500l-3.500-2.200L7 6.500l3 2zM3.500 9.500L7 7.500l3.500 2L7 12z" fill="#fff" /></Icon>
      </TrayButton>
      <TrayButton label="OneDrive">
        <Icon w={16} h={12}><path d="M0 8q0-3 2.500-3Q3 0.500 7 0.500q3 0 4 2.500-3.500-.5-5 3Q3.500 6.500 4 10H2Q0 10 0 8zM5 9q0-2.500 2.500-2.500Q8.500 4 11 4q3 0 3 3 2 .5 2 2.500T13.500 11.500H7Q5 11.500 5 9z" fill="#fff" /></Icon>
      </TrayButton>
      <TrayButton label="Batterij">
        <Icon w={16} h={12}>
          <path d="M5 3.5h9.500v7H4.500V8M14.500 5.500h1v3h-1" stroke="#fff" />
          <path d="M7 5.500h6v3H7zM0 2h5v3L3.500 6.500h-2L0 5z" fill="#fff" />
          <path d="M1.500 0v2M3.500 0v2M2.500 6v5" stroke="#fff" />
        </Icon>
      </TrayButton>
      <TrayButton label="Netwerk">
        <Icon w={14} h={14}>
          <path d="M1 13Q1 1.500 13 1.500M4 13Q4 4.500 13 4.500M7 13Q7 7.500 13 7.500" stroke="#ccc" />
          <path d="M9 13q0-3 4-3v3z" fill="#fff" />
        </Icon>
      </TrayButton>
      <TrayButton label="Volume">
        <Icon w={16} h={14}>
          <path d="M0.500 4.500h2.500l4-4v13l-4-4H0.500z" stroke="#fff" />
          <path d="M9 5q1.500 2 0 4" stroke="#fff" />
          <path d="M11 3q3 4 0 8M13 1q4.500 6 0 12" stroke="#888" />
        </Icon>
      </TrayButton>
      <TrayButton label="Toetsenbord" width="w-[34px]"><span>NLD<br />INTL</span></TrayButton>
      <TrayButton label="Klok" width="w-[66px]"><span>20:26<br />3-11-2017</span></TrayButton>
      <TrayButton label="Actiecentrum" width="w-10">
        <Icon w={17} h={17}><path d="M0.500 1h15v11.500H10.500L8 15.500l-2-3H0.500z" stroke="#fff" strokeWidth="1.2" /></Icon>
      </TrayButton>
      <span className="ml-2 h-full w-1 border-l border-[#666]" />
    </div>
  </footer>
);

const App: React.FC = () => (
  <div className="flex min-h-screen flex-col bg-white font-['Open_Sans','Noto_Sans',sans-serif]">
    <TitleBar />
    <TabStrip />
    <Ribbon />
    <FormulaBar />
    <main className="flex flex-1">
      <div className="min-w-0 flex-1 overflow-hidden">
        <Sheet />
      </div>
      <div className="flex w-[21px] flex-col items-center bg-[#f5f5f5] pt-[2px] pb-px">
        <ArrowBox label="Omhoog" d="M0.500 6.500h8L4.500 2.500z" />
        <span className="w-[15px] flex-1 border border-[#ababab] bg-white" />
        <span className="h-[18px]" />
        <ArrowBox label="Omlaag" d="M0.500 2.500h8L4.500 6.500z" />
      </div>
    </main>
    <SheetTabs />
    <StatusBar />
    <Taskbar />
  </div>
);

export default App;
